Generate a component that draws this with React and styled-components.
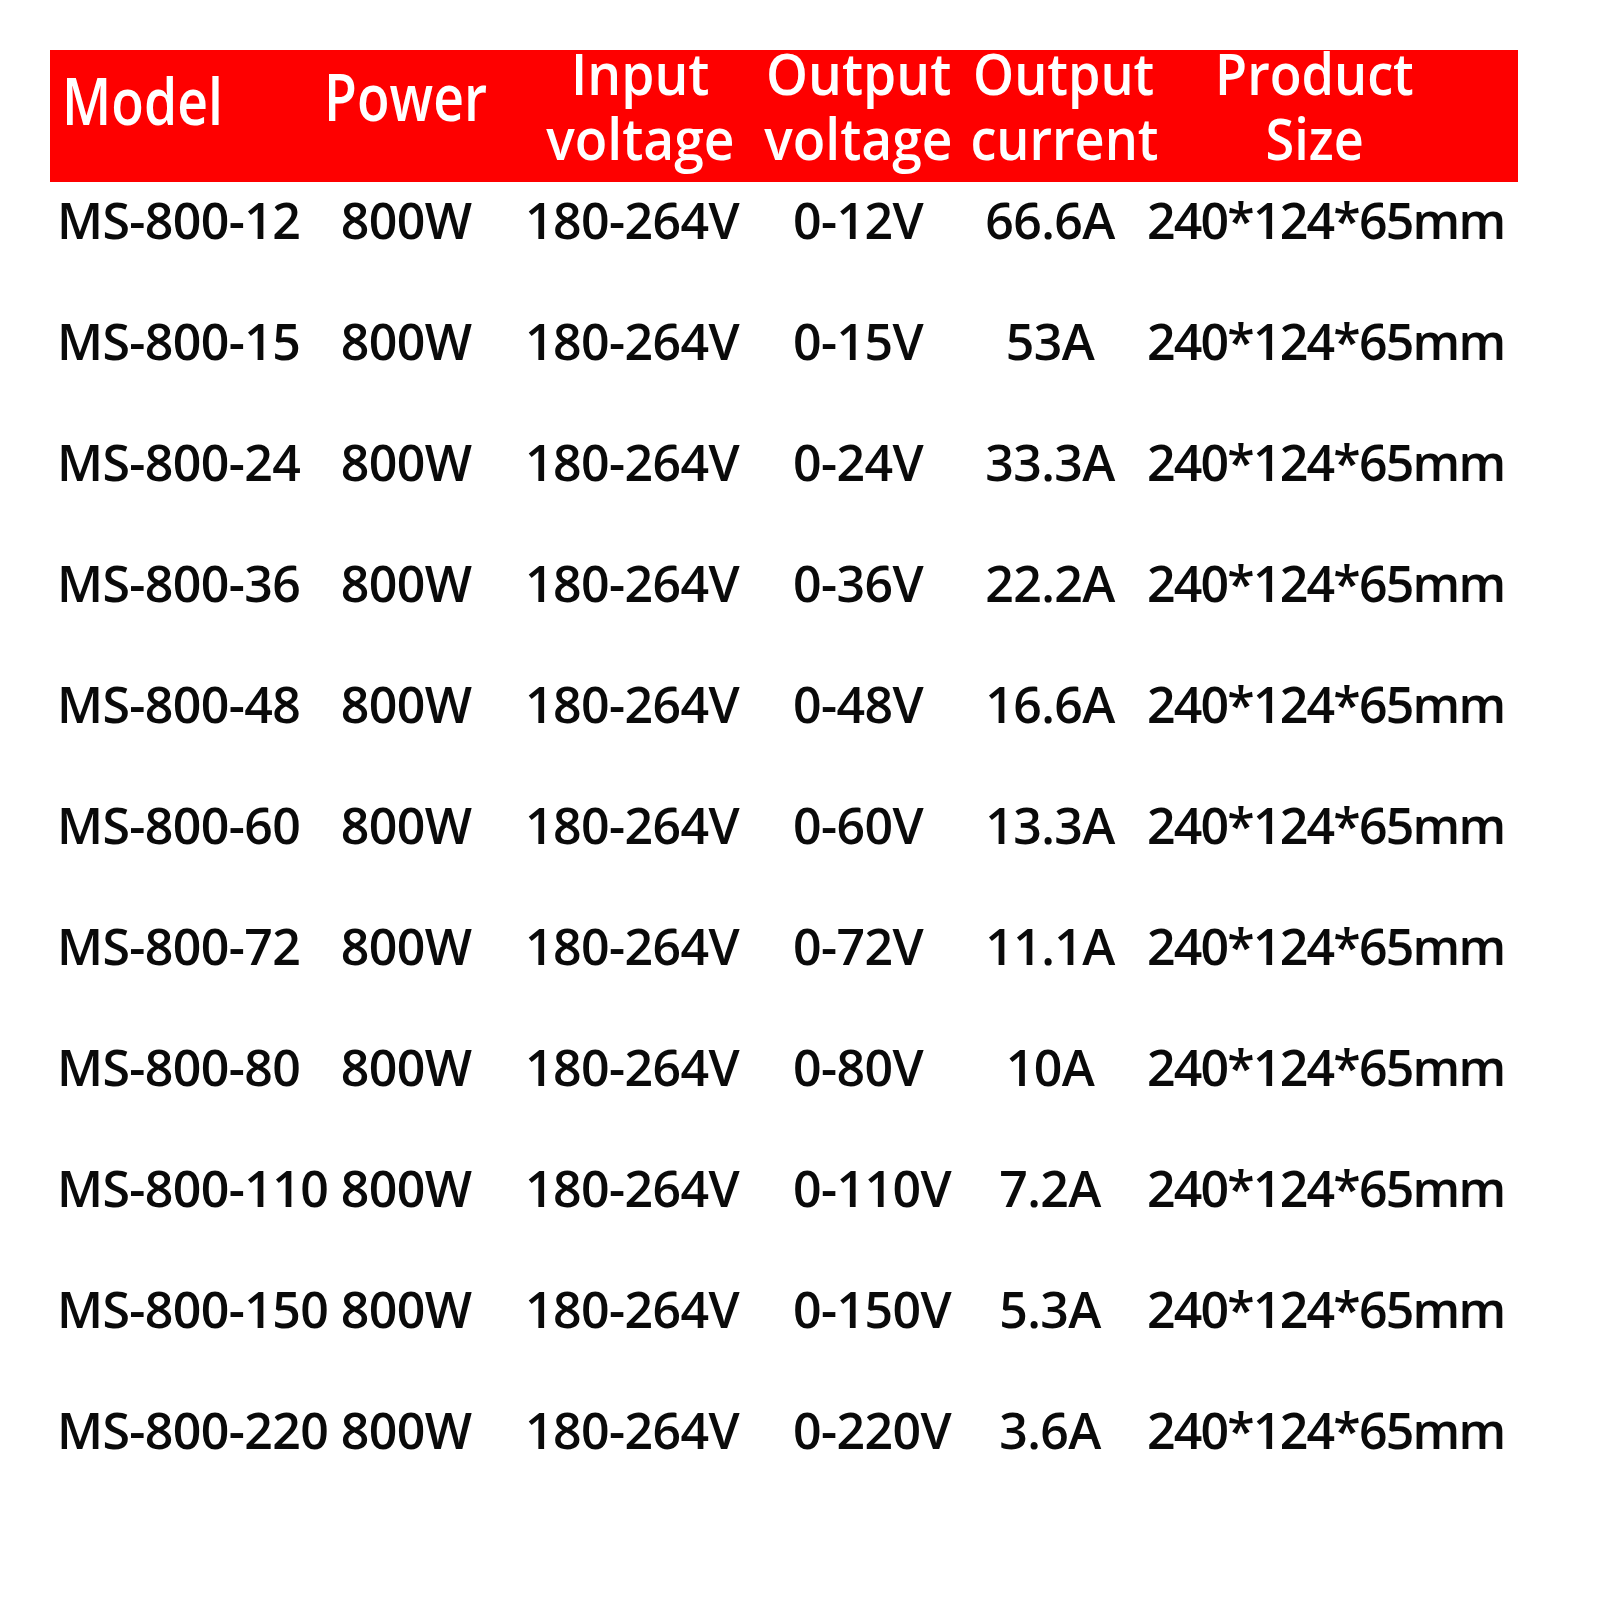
import React from "react";
import styled, { createGlobalStyle } from "styled-components";

const GlobalStyle = createGlobalStyle`
  html, body {
    margin: 0;
    padding: 0;
    background: #ffffff;
  }
  body {
    font-family: "Open Sans", "Noto Sans", "Liberation Sans", sans-serif;
  }
`;

const COLUMNS = "280px 152px 300px 173px 190px 373px";

const Page = styled.div`
  width: 1600px;
  height: 1600px;
  box-sizing: border-box;
  padding: 50px 0 0 50px;
  background: #ffffff;
`;

const Table = styled.div`
  width: 1468px;
`;

const HeaderRow = styled.div`
  display: grid;
  grid-template-columns: ${COLUMNS};
  height: 132px;
  background: #fe0000;
  color: #ffffff;
`;

const HeaderCell = styled.div`
  display: flex;
  flex-direction: column;
  align-items: ${(p) => (p.$left ? "flex-start" : "center")};
  margin-top: ${(p) => p.$top}px;
  padding-left: ${(p) => Math.max(p.$shift, 0) * 2 + (p.$left ? 12 : 0)}px;
  padding-right: ${(p) => Math.max(-p.$shift, 0) * 2}px;
`;

const HeaderLine = styled.span`
  display: block;
  font-size: ${(p) => p.$size}px;
  line-height: ${(p) => p.$lh}px;
  font-weight: 600;
  white-space: nowrap;
  transform: scaleX(${(p) => p.$squeeze});
  transform-origin: ${(p) => (p.$left ? "left center" : "center")};
`;

const BodyRow = styled.div`
  display: grid;
  grid-template-columns: ${COLUMNS};
  height: 121px;
  box-sizing: border-box;
  padding-top: 8px;
  font-size: 50px;
  line-height: 60px;
  font-weight: 600;
  color: #0a0a0a;
`;

const Cell = styled.div`
  white-space: nowrap;
  text-align: ${(p) => p.$align};
  padding-left: ${(p) => p.$pad || 0}px;
  letter-spacing: ${(p) => (p.$tight ? -1.8 : -0.6)}px;
`;

const headers = [
  { lines: ["Model"], size: 66, lh: 66, squeeze: 0.81, top: 16, shift: 0, left: true },
  { lines: ["Power"], size: 66, lh: 66, squeeze: 0.81, top: 12, shift: 0 },
  { lines: ["Input", "voltage"], size: 58, lh: 65, squeeze: 0.92, top: -10, shift: 8 },
  { lines: ["Output", "voltage"], size: 58, lh: 65, squeeze: 0.92, top: -10, shift: -10 },
  { lines: ["Output", "current"], size: 58, lh: 65, squeeze: 0.9, top: -10, shift: 14 },
  { lines: ["Product", "Size"], size: 58, lh: 65, squeeze: 0.9, top: -10, shift: -17 },
];

const rows = [
  ["12", "66.6A"],
  ["15", "53A"],
  ["24", "33.3A"],
  ["36", "22.2A"],
  ["48", "16.6A"],
  ["60", "13.3A"],
  ["72", "11.1A"],
  ["80", "10A"],
  ["110", "7.2A"],
  ["150", "5.3A"],
  ["220", "3.6A"],
];

export default function App() {
  return (
    <>
      <GlobalStyle />
      <Page>
        <Table>
          <HeaderRow>
            {headers.map((h) => (
              <HeaderCell key={h.lines.join(" ")} $top={h.top} $shift={h.shift} $left={h.left}>
                {h.lines.map((line) => (
                  <HeaderLine
                    key={line}
                    $size={h.size}
                    $lh={h.lh}
                    $squeeze={h.squeeze}
                    $left={h.left}
                  >
                    {line}
                  </HeaderLine>
                ))}
              </HeaderCell>
            ))}
          </HeaderRow>

          {rows.map(([volt, amp]) => (
            <BodyRow key={volt}>
              <Cell $align="left" $pad={7}>MS-800-{volt}</Cell>
              <Cell $align="center">800W</Cell>
              <Cell $align="center">180-264V</Cell>
              <Cell $align="left" $pad={11}>0-{volt}V</Cell>
              <Cell $align="center">{amp}</Cell>
              <Cell $align="left" $pad={2} $tight>240*124*65mm</Cell>
            </BodyRow>
          ))}
        </Table>
      </Page>
    </>
  );
}
